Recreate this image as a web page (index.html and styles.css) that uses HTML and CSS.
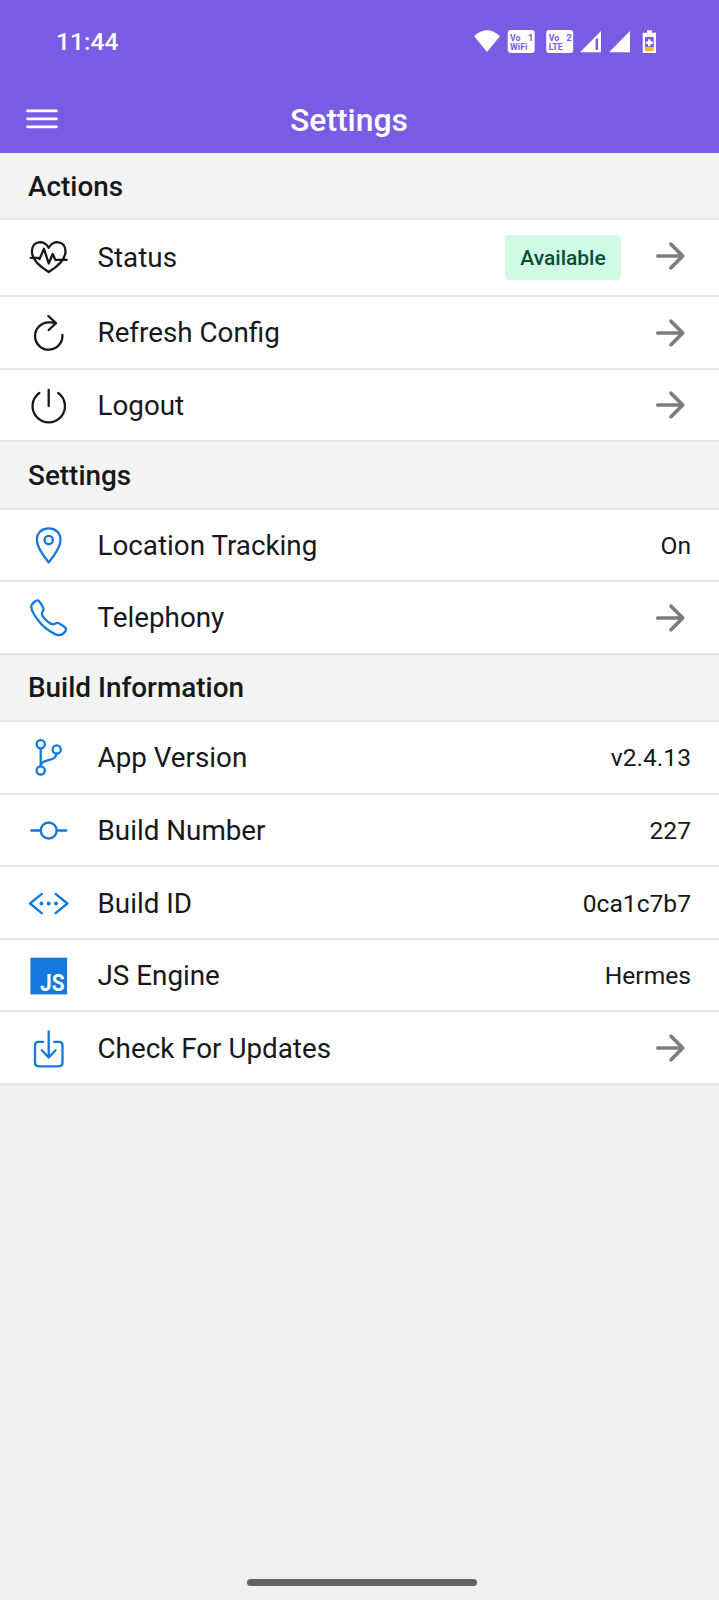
FILE: index.html
```html
<!DOCTYPE html>
<html lang="en">
<head>
<meta charset="utf-8">
<title>Settings</title>
<link rel="stylesheet" href="styles.css">
</head>
<body>
<div class="screen">
  <header class="top">
    <div class="statusbar">
      <span class="time">11:44</span>
      <svg class="indicators" width="184" height="26" viewBox="473 29 184 26">
        <path d="M487 52 L474.2 36.2 Q487 24.5 499.900 36.200 Z" fill="#fff"/>
        <rect x="507.700" y="30" width="27" height="23" rx="3" fill="#fff"/>
        <rect x="546.200" y="30" width="27" height="23" rx="3" fill="#fff"/>
        <g class="sim">
          <text x="510" y="40.500" textLength="10.500" lengthAdjust="spacingAndGlyphs">Vo</text>
          <text x="528" y="40.500">1</text>
          <text x="510" y="50.300" textLength="17.500" lengthAdjust="spacingAndGlyphs">WiFi</text>
          <text x="548.700" y="40.500" textLength="10.500" lengthAdjust="spacingAndGlyphs">Vo</text>
          <text x="566.300" y="40.500">2</text>
          <text x="548.700" y="50.300" textLength="14" lengthAdjust="spacingAndGlyphs">LTE</text>
        </g>
        <path d="M580 52.300 L601 31 V52.300 Z" fill="#fff"/>
        <path d="M596.800 38.500 V50" stroke="#795ce4" stroke-width="2.400"/>
        <path d="M609 52.300 L630 31 V52.300 Z" fill="#fff"/>
        <path d="M647 30.300 h5 v2.400 h4 v20.300 h-13.300 v-20.300 h4.300 Z" fill="#fff"/>
        <path d="M645 37 h8.700 v10 h-8.700 Z" fill="#795ce4"/>
        <path d="M645 47 h8.700 v4 h-8.700 Z" fill="#fbb829"/>
        <path d="M649.300 39.300 v7 M645.800 42.800 h7" stroke="#fff" stroke-width="2.400"/>
      </svg>
    </div>
    <div class="navbar">
      <svg class="menu" width="34" height="20" viewBox="0 0 34 20"><path d="M2.500 1.900 H31.500 M2.500 9.900 H31.500 M2.500 17.900 H31.500"/></svg>
      <h1 class="title">Settings</h1>
    </div>
  </header>

  <main class="list">
    <h2 class="section">Actions</h2>
    <div class="row row-status">
      <svg class="icon" viewBox="0 0 41 41"><path d="M20.700 35 C15 31.500 3.900 24.500 3.900 14.300 C3.900 3.800 16.500 2.300 20.700 10.700 C24.900 2.300 37.500 3.800 37.500 14.300 C37.500 24.500 26.400 31.500 20.700 35 Z M2.700 20.800 H9.800 L11.500 22 L16 11.800 L20.700 26.500 L24.700 17 L27.300 22.800 H38.700"/></svg>
      <span class="label">Status</span>
      <span class="badge">Available</span>
      <svg class="arrow" viewBox="0 0 32 32"><path d="M3.800 16 H28.500 M17 4.200 L28.700 16 L17 27.800"/></svg>
    </div>
    <div class="row">
      <svg class="icon" viewBox="0 0 41 41"><path d="M20.300 4 L28 11.200 L20.700 18 M27.500 11.200 C26 10.400 23 10.300 20.700 10.300 A13.700 13.700 0 1 0 34.400 23"/></svg>
      <span class="label">Refresh Config</span>
      <svg class="arrow" viewBox="0 0 32 32"><path d="M3.800 16 H28.500 M17 4.200 L28.700 16 L17 27.800"/></svg>
    </div>
    <div class="row">
      <svg class="icon" viewBox="0 0 41 41"><path d="M11.300 8 A16.200 16.200 0 1 0 30.200 8 M20.700 4.900 V21"/></svg>
      <span class="label">Logout</span>
      <svg class="arrow" viewBox="0 0 32 32"><path d="M3.800 16 H28.500 M17 4.200 L28.700 16 L17 27.800"/></svg>
    </div>

    <h2 class="section">Settings</h2>
    <div class="row">
      <svg class="icon blue" viewBox="0 0 41 41"><path d="M20.700 37.400 C17.500 33.500 8.900 22.500 8.900 15 C8.900 7.500 14.200 3.400 20.700 3.400 C27.200 3.400 32.500 7.500 32.500 15 C32.500 22.500 23.900 33.500 20.700 37.400 Z"/><circle cx="20.700" cy="15" r="4.200"/></svg>
      <span class="label">Location Tracking</span>
      <span class="value">On</span>
    </div>
    <div class="row">
      <svg class="icon blue" viewBox="0 0 41 41"><path d="M10.900 4 C10.100 3.200 8.700 3.300 7.700 3.900 C5 5.500 3.200 7.200 3.300 10.200 C3.500 13.500 6.500 18.500 10.500 23.800 C14.500 29 21 34.200 27 37.100 C31.500 39.200 34.500 38 36.800 35 C38.200 33.200 38.600 31.700 37.300 30.600 C35.500 29 33 27.400 30.800 26.200 C28.200 24.900 27.300 27.600 24.800 27.400 C21.500 27 13.900 20 13.900 16.700 C13.800 14.600 16.300 13.500 15.300 11.100 C14.200 8.600 12.500 5.800 10.900 4 Z"/></svg>
      <span class="label">Telephony</span>
      <svg class="arrow" viewBox="0 0 32 32"><path d="M3.800 16 H28.500 M17 4.200 L28.700 16 L17 27.800"/></svg>
    </div>

    <h2 class="section">Build Information</h2>
    <div class="row">
      <svg class="icon blue" viewBox="0 0 41 41"><circle cx="12.700" cy="7.200" r="4.100"/><circle cx="28.700" cy="12.500" r="4.100"/><circle cx="12.700" cy="33.500" r="4.100"/><path d="M12.700 11.400 V29.300 M28.500 16.700 C27.500 25.500 15 21 12.700 28"/></svg>
      <span class="label">App Version</span>
      <span class="value">v2.4.13</span>
    </div>
    <div class="row">
      <svg class="icon blue" viewBox="0 0 41 41"><circle cx="20.700" cy="20.500" r="8"/><path d="M3.200 20.500 H12.500 M28.900 20.500 H38.200"/></svg>
      <span class="label">Build Number</span>
      <span class="value">227</span>
    </div>
    <div class="row">
      <svg class="icon blue" viewBox="0 0 41 41"><path d="M13.800 10.900 L2 20.500 L13.800 30.200 M27.600 10.900 L39.400 20.500 L27.600 30.200"/><path class="dots" d="M13.400 20.500 h0 M20.700 20.500 h0 M28 20.500 h0"/></svg>
      <span class="label">Build ID</span>
      <span class="value">0ca1c7b7</span>
    </div>
    <div class="row">
      <svg class="icon" viewBox="0 0 41 41"><rect class="js-box" x="2.400" y="2.700" width="36.700" height="36.700"/><text class="js-text" x="12" y="35.900" textLength="24.500" lengthAdjust="spacingAndGlyphs">JS</text></svg>
      <span class="label">JS Engine</span>
      <span class="value">Hermes</span>
    </div>
    <div class="row">
      <svg class="icon blue" viewBox="0 0 41 41"><path d="M20.700 3.500 V29.500 M13.800 22.300 L20.700 29.500 L27.600 22.300 M15 13.900 H10.500 Q7 13.900 7 17.400 V34.800 Q7 38.300 10.500 38.300 H31 Q34.500 38.300 34.500 34.800 V17.400 Q34.500 13.900 31 13.900 H26.400"/></svg>
      <span class="label">Check For Updates</span>
      <svg class="arrow" viewBox="0 0 32 32"><path d="M3.800 16 H28.500 M17 4.200 L28.700 16 L17 27.800"/></svg>
    </div>
  </main>
  <div class="home-bar"></div>
</div>
</body>
</html>
```
FILE: styles.css
```css
* { box-sizing: border-box; }

body {
  margin: 0;
  background: #f0f0f0;
  color: #17181a;
  font-family: Roboto, "Liberation Sans", sans-serif;
}

.screen {
  display: flex;
  flex-direction: column;
  width: 719px;
  height: 1600px;
  padding-bottom: 14px;
}

.top {
  height: 153px;
  background: #795ce4;
  color: #fff;
}

.statusbar {
  display: flex;
  align-items: center;
  justify-content: space-between;
  height: 84px;
  padding: 0 62px 0 56px;
}

.time {
  padding-bottom: 1px;
  font-size: 24.6px;
  font-weight: 500;
}

.sim {
  fill: #795ce4;
  font-size: 9.5px;
  font-weight: 700;
}

.navbar {
  display: grid;
  grid-template-columns: 34px 1fr 34px;
  align-items: center;
  height: 69px;
  padding: 0 34px 0 25px;
}

.menu path {
  stroke: #fff;
  stroke-width: 2.6;
  stroke-linecap: round;
}

.title {
  margin: 0;
  padding: 2px 12px 0 0;
  font-size: 31.9px;
  font-weight: 500;
  text-align: center;
}

.section {
  display: flex;
  align-items: center;
  height: 67.3px;
  margin: 0;
  padding: 1px 0 0 28px;
  border-bottom: 2px solid #e5e5e5;
  background: #f3f3f3;
  font-size: 27.9px;
  font-weight: 500;
}

.row {
  display: flex;
  align-items: center;
  height: 72.6px;
  padding: 1px 28px 0;
  border-bottom: 2px solid #e5e5e5;
  background: #fff;
}

.row-status {
  height: 76.8px;
  padding-top: 0;
}

.row-status .arrow { margin-bottom: 4px; }

.icon {
  flex: none;
  width: 41px;
  height: 41px;
  margin-right: 28.5px;
  fill: none;
  stroke: #17181a;
  stroke-width: 2.3;
  stroke-linecap: round;
  stroke-linejoin: round;
}

.blue { stroke: #1578dc; }
.dots { stroke-width: 4; }
.js-box { fill: #1578dc; stroke: none; }

.js-text {
  fill: #fff;
  stroke: none;
  font: 700 23px Roboto, sans-serif;
}

.label {
  flex: 1;
  font-size: 27.8px;
}

.value { font-size: 24.6px; }

.badge {
  display: flex;
  align-items: center;
  justify-content: center;
  width: 116px;
  height: 45.5px;
  margin-right: 33px;
  border-radius: 4px;
  background: #d1fae5;
  color: #064e3b;
  font-size: 21px;
  font-weight: 500;
}

.arrow {
  flex: none;
  width: 32px;
  height: 32px;
  margin-right: 5px;
  fill: none;
  stroke: #7d7d7d;
  stroke-width: 3.7;
  stroke-linecap: round;
  stroke-linejoin: round;
}

.home-bar {
  width: 230px;
  height: 7px;
  margin: auto auto 0 247px;
  border-radius: 4px;
  background: #626361;
}
```
